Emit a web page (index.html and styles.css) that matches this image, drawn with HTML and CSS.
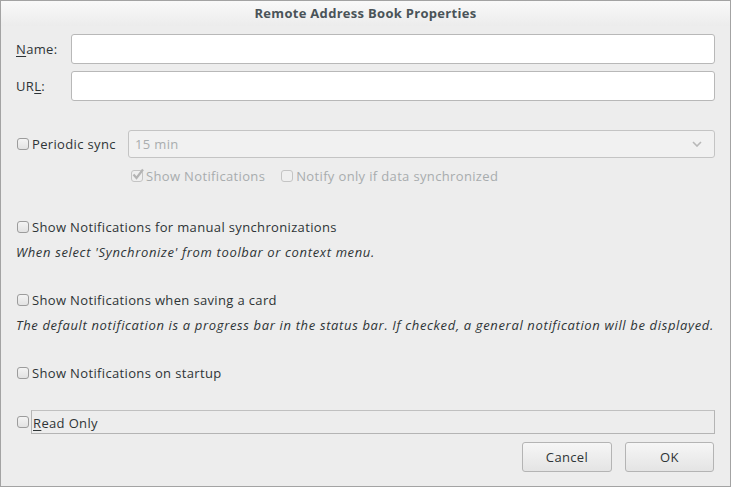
FILE: index.html
```html
<!DOCTYPE html>
<html>
<head>
<meta charset="utf-8">
<link rel="stylesheet" href="styles.css">
</head>
<body>
<div class="window">
  <div class="titlebar">Remote Address Book Properties</div>
  <div class="content">
    <div class="field-row first">
      <label class="field-label"><u>N</u>ame:</label>
      <div class="entry"></div>
    </div>
    <div class="field-row">
      <label class="field-label">UR<u>L</u>:</label>
      <div class="entry"></div>
    </div>

    <div class="sync-row">
      <span class="check"></span>
      <span class="check-label">Periodic sync</span>
      <div class="combo">
        <span>15 min</span>
        <svg class="chev" width="10" height="6" viewBox="0 0 10 6"><path d="M1 1 L5 5 L9 1" fill="none" stroke="#b8b8b8" stroke-width="1.6"/></svg>
      </div>
    </div>
    <div class="sub-row">
      <span class="check checked disabled"><svg width="14" height="13" viewBox="0 0 14 13"><path d="M2.5 6.5 L5.5 10 L12 1.5" fill="none" stroke="#b4b4b4" stroke-width="2.2"/></svg></span>
      <span class="check-label dim">Show Notifications</span>
      <span class="check disabled gap"></span>
      <span class="check-label dim">Notify only if data synchronized</span>
    </div>

    <div class="opt-row r1">
      <span class="check"></span>
      <span class="check-label">Show Notifications for manual synchronizations</span>
    </div>
    <div class="hint">When select 'Synchronize' from toolbar or context menu.</div>

    <div class="opt-row r2">
      <span class="check"></span>
      <span class="check-label">Show Notifications when saving a card</span>
    </div>
    <div class="hint">The default notification is a progress bar in the status bar. If checked, a general notification will be displayed.</div>

    <div class="opt-row r3">
      <span class="check"></span>
      <span class="check-label">Show Notifications on startup</span>
    </div>

    <div class="ro-row">
      <span class="check"></span>
      <div class="ro-frame"><u>R</u>ead Only</div>
    </div>

    <div class="buttons">
      <div class="btn cancel">Cancel</div>
      <div class="btn ok">OK</div>
    </div>
  </div>
</div>
</body>
</html>
```

FILE: styles.css
```css
html, body {
  margin: 0;
  padding: 0;
  background: #ededed;
}
.window {
  width: 731px;
  height: 487px;
  box-sizing: border-box;
  border: 1px solid #a3a3a3;
  background: #ededed;
  font-family: "Open Sans", "DejaVu Sans", sans-serif;
  font-size: 13px;
  letter-spacing: 0.35px;
  color: #2e3436;
  overflow: hidden;
}
.titlebar {
  height: 25px;
  line-height: 24px;
  text-align: center;
  font-weight: bold;
  color: #4a5358;
  background: linear-gradient(#f9f9f9, #ececec);
  font-size: 13px;
  letter-spacing: 0.3px;
}
.content {
  padding: 0 15px 0 15px;
}
u { text-decoration: underline; text-underline-offset: 2px; }
.field-row {
  display: flex;
  align-items: center;
  height: 30px;
  margin-top: 7px;
}
.field-row.first { margin-top: 8px; }
.field-label {
  width: 55px;
}
.entry {
  flex: 1;
  height: 30px;
  box-sizing: border-box;
  border: 1px solid #b8b8b8;
  border-radius: 3px;
  background: #ffffff;
}
.check {
  width: 12px;
  height: 12px;
  box-sizing: border-box;
  border: 1px solid #9c9c9c;
  border-radius: 3px;
  background: linear-gradient(#f4f4f4, #e2e2e2);
  flex: none;
  position: relative;
  margin-left: 1px;
}
.check.disabled {
  border-color: #c4c4c4;
  background: #efefef;
}
.check.checked svg {
  position: absolute;
  left: -1px;
  top: -3px;
}
.check-label {
  margin-left: 3px;
  white-space: nowrap;
}
.dim { color: #a8acad; }
.sync-row {
  display: flex;
  align-items: center;
  margin-top: 29px;
  height: 28px;
}
.sync-row .check-label { width: 96px; }
.combo {
  flex: 1;
  height: 28px;
  box-sizing: border-box;
  border: 1px solid #c4c4c4;
  border-radius: 3px;
  background: #f1f1f1;
  display: flex;
  align-items: center;
  justify-content: space-between;
  padding: 0 12px 0 6px;
  color: #a9adae;
}
.sub-row {
  display: flex;
  align-items: center;
  margin-top: 8px;
  padding-left: 114px;
  height: 20px;
}
.sub-row .check.gap { margin-left: 16px; }
.opt-row {
  display: flex;
  align-items: center;
  height: 20px;
}
.r1 { margin-top: 31px; }
.r2 { margin-top: 28px; }
.r3 { margin-top: 28px; }
.hint {
  font-style: italic;
  letter-spacing: 0.65px;
  margin-top: 5px;
  height: 20px;
  line-height: 20px;
  white-space: nowrap;
}
.ro-row {
  display: flex;
  align-items: center;
  margin-top: 27px;
  height: 23px;
}
.ro-frame {
  flex: 1;
  height: 24px;
  box-sizing: border-box;
  border: 1px solid #b4b4b4;
  border-top-color: #c0c0c0;
  line-height: 24px;
  padding-left: 1px;
  margin-left: 2px;
}
.buttons {
  display: flex;
  justify-content: flex-end;
  gap: 13px;
  margin-top: 9px;
  padding-right: 1px;
}
.btn {
  width: 90px;
  height: 30px;
  box-sizing: border-box;
  border: 1px solid #b4b4b4;
  border-radius: 3px;
  background: linear-gradient(#f6f6f6, #e4e4e4);
  text-align: center;
  line-height: 28px;
}
.btn.ok { width: 89px; }
```
